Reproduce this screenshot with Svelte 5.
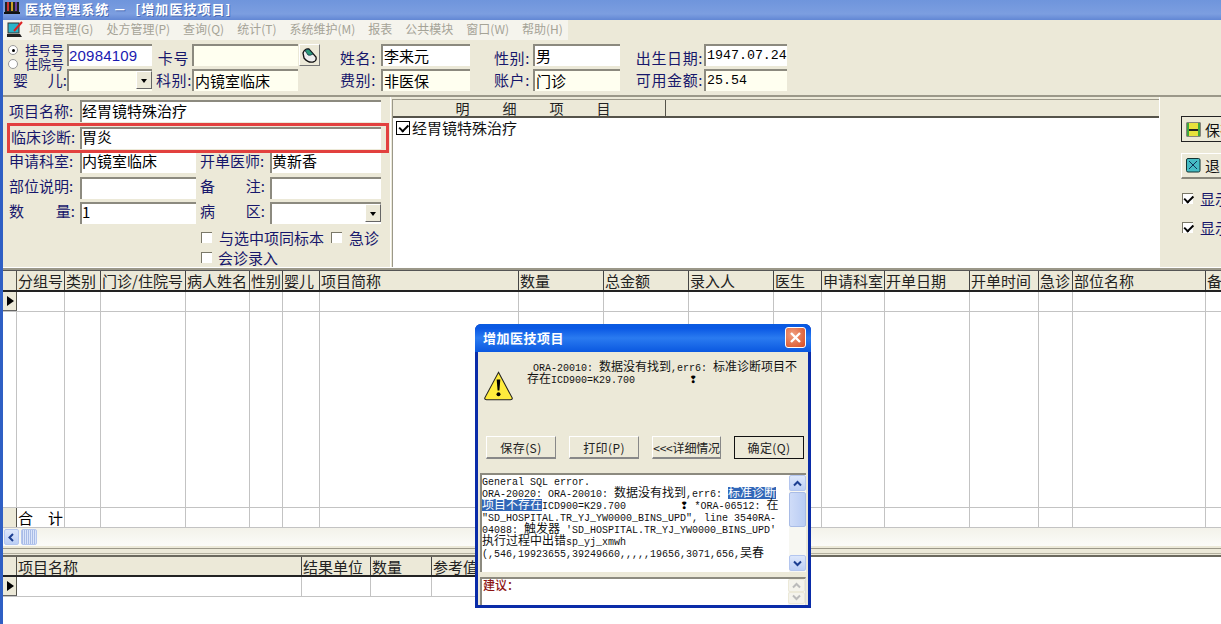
<script>
  const cols1 = [
    ['分组号', 48], ['类别', 36], ['门诊/住院号', 85], ['病人姓名', 64], ['性别', 33], ['婴儿', 37],
    ['项目简称', 199], ['数量', 85], ['总金额', 85], ['录入人', 85], ['医生', 48], ['申请科室', 63],
    ['开单日期', 85], ['开单时间', 69], ['急诊', 34], ['部位名称', 133], ['备注', 60]
  ];
  const cols2 = [['项目名称', 285], ['结果单位', 69], ['数量', 61], ['参考值', 200]];
  const menu = ['项目管理(G)', '处方管理(P)', '查询(Q)', '统计(T)', '系统维护(M)', '报表', '公共模块', '窗口(W)', '帮助(H)'];
  const sp = (n) => '\u00a0'.repeat(n);
</script>

<div class="win">
  <header class="title">
    <svg class="appicon" width="16" height="14" viewBox="0 0 16 14">
      <rect x="1" y="1" width="14" height="12" fill="#222"/>
      <rect x="3" y="1" width="2" height="9" fill="#c33"/>
      <rect x="7" y="1" width="2" height="9" fill="#c9a227"/>
      <rect x="11" y="1" width="2" height="9" fill="#6a3fa0"/>
      <rect x="0" y="11" width="16" height="2" fill="#111"/>
    </svg>
    <span>医技管理系统 － {sp(1)}[增加医技项目]</span>
  </header>

  <nav class="menubar">
    <div class="menus">
      <svg class="menuicon" width="18" height="18" viewBox="0 0 18 18">
        <rect x="2" y="2" width="11" height="10" fill="#2bb3c9" stroke="#333"/>
        <path d="M8 10 L16 1" stroke="#d22" stroke-width="2"/>
        <path d="M1 13 H14 L16 16 H1 Z" fill="#222"/>
      </svg>
      {#each menu as m}<span>{m}</span>{/each}
    </div>
  </nav>

  <section class="patient">
    <div class="radios">
      <label><i class="radio on"></i>挂号号</label>
      <label><i class="radio"></i>住院号</label>
    </div>
    <div class="in white blue">20984109</div>
    <div class="lb card r1">卡号</div>
    <div class="in yellow"></div>
    <div class="cardbtn">
      <svg width="17" height="17" viewBox="0 0 17 17">
        <path d="M2 6 Q4 1 8 2 L15 10 Q16 14 12 15 Q7 16 3 11 Z" fill="#eee" stroke="#111" stroke-width="1.300"/>
        <path d="M4 3.500 Q6 2 8 2.500 L12 7 Q9 9 7 8 Z" fill="#2a9a78" stroke="#134" stroke-width=".8"/>
      </svg>
    </div>
    <div class="lb name r1">姓名:</div>
    <div class="in white">李来元</div>
    <div class="lb sex r1">性别:</div>
    <div class="in white">男</div>
    <div class="lb birth r1">出生日期:</div>
    <div class="in white mono">1947.07.24</div>

    <div class="lb baby">婴<b></b>儿:</div>
    <div class="in yellow combo"><i class="drop"></i></div>
    <div class="lb dept">科别:</div>
    <div class="in yellow span2">内镜室临床</div>
    <div class="lb name">费别:</div>
    <div class="in yellow">非医保</div>
    <div class="lb sex">账户:</div>
    <div class="in yellow">门诊</div>
    <div class="lb birth">可用金额:</div>
    <div class="in yellow mono">25.54</div>
  </section>

  <section class="middle">
    <div class="form">
      <div class="row wide first-row"><span class="lb">项目名称:</span><div class="in white grow">经胃镜特殊治疗</div></div>
      <div class="row wide diag"><span class="lb">临床诊断:</span><div class="in white grow">胃炎</div></div>
      <div class="row split s1">
        <span class="lb">申请科室:</span><div class="in white w116">内镜室临床</div>
        <span class="lb lb2">开单医师:</span><div class="in white grow">黄新香</div>
      </div>
      <div class="row split">
        <span class="lb">部位说明:</span><div class="in white w116"></div>
        <span class="lb lb2 just"><em>备</em><em>注:</em></span><div class="in white grow"></div>
      </div>
      <div class="row split">
        <span class="lb just"><em>数</em><em>量:</em></span><div class="in white w116">1</div>
        <span class="lb lb2 just"><em>病</em><em>区:</em></span><div class="in white grow combo"><i class="drop"></i></div>
      </div>
      <div class="checks">
        <label><i class="box"></i><span class="gap1">与选中项同标本</span><i class="box b2"></i><span class="gap2">急诊</span></label>
        <label><i class="box"></i><span class="gap1 g3">会诊录入</span></label>
      </div>
    </div>

    <div class="detail">
      <div class="dhead"><div class="dcol">明<b></b>细<b></b>项<b></b>目</div></div>
      <div class="dbody"><i class="box checked"></i>经胃镜特殊治疗</div>
    </div>

    <div class="side">
      <button class="tool def">
        <svg width="15" height="15" viewBox="0 0 15 15">
          <rect x="0.5" y="0.5" width="14" height="14" fill="#222"/>
          <rect x="3" y="1" width="9" height="6" fill="#e8e23c"/>
          <rect x="3" y="9" width="9" height="5" fill="#e8e23c"/>
          <rect x="1" y="1" width="2" height="13" fill="#3fa63f"/>
          <rect x="12" y="1" width="2" height="13" fill="#3fa63f"/>
        </svg>保存
      </button>
      <button class="tool exit">
        <svg width="15" height="15" viewBox="0 0 15 15">
          <rect x="0.5" y="0.5" width="13.500" height="13.500" rx="1.500" fill="#45bcc4" stroke="#133"/>
          <path d="M3 3 L11 11 M11 3 L3 11" stroke="#135" stroke-width="1"/>
        </svg>退出
      </button>
      <label class="show s-a"><i class="box checked"></i>显示全部</label>
      <label class="show s-b"><i class="box checked"></i>显示全部</label>
    </div>
  </section>

  <section class="grid g1">
    <div class="ghead">
      <div class="ind"></div>
      {#each cols1 as c}<div class="th" style="width:{c[1]}px">{c[0]}</div>{/each}
    </div>
    <div class="grow-col">
      <div class="ind arrow"><i></i></div>
      {#each cols1 as c}<div class="td" style="width:{c[1]}px"></div>{/each}
    </div>
    <div class="gfill">
      <div class="ind"></div>
      {#each cols1 as c}<div class="td" style="width:{c[1]}px"></div>{/each}
    </div>
    <div class="gfoot">
      <div class="ind"></div>
      {#each cols1 as c, i}<div class="td" style="width:{c[1]}px">{i === 0 ? '合　计' : ''}</div>{/each}
    </div>
    <div class="hscroll">
      <span class="sbtn"><svg width="9" height="9" viewBox="0 0 9 9"><path d="M6 1 L2.500 4.500 L6 8" fill="none" stroke="#1d3f91" stroke-width="2"/></svg></span>
      <span class="sthumb"></span>
    </div>
  </section>

  <div class="splitter"></div>

  <section class="grid g2">
    <div class="ghead">
      <div class="ind"></div>
      {#each cols2 as c}<div class="th" style="width:{c[1]}px">{c[0]}</div>{/each}
    </div>
    <div class="grow-col">
      <div class="ind arrow"><i></i></div>
      {#each cols2 as c}<div class="td" style="width:{c[1]}px"></div>{/each}
    </div>
  </section>

  <div class="dialog">
    <div class="dtitle">
      <span>增加医技项目</span>
      <span class="close"><svg width="13" height="13" viewBox="0 0 13 13"><path d="M2 2 L11 11 M11 2 L2 11" stroke="#fff" stroke-width="2.400"/></svg></span>
    </div>
    <div class="dmain">
      <div class="dmsg">
        <svg class="warn" width="31" height="32" viewBox="0 0 34 34">
          <path d="M17 2 L32 30 Q32.500 32 30 32 L4 32 Q1.500 32 2 30 Z" fill="#ffec3d" stroke="#222" stroke-width="1.200"/>
          <path d="M15 10 L19 10 L18 22 L16 22 Z" fill="#000"/>
          <circle cx="17" cy="26" r="2.200" fill="#000"/>
        </svg>
        <p><span class="lat">{sp(1)}ORA-20010:{sp(1)}</span>数据没有找到<span class="lat">,err6:{sp(1)}</span>标准诊断项目不<br>存在<span class="lat">ICD900=K29.700{sp(9)}</span><span class="bang">❢</span></p>
      </div>
      <div class="dbtns">
        <button>保存(S)</button>
        <button>打印(P)</button>
        <button class="narrow">&lt;&lt;&lt;详细情况</button>
        <button class="default">确定(Q)</button>
      </div>
      <div class="dbox first">
        <div class="dtext"><span class="lat">General SQL error.</span><br><span class="lat">ORA-20020: ORA-20010:{sp(1)}</span>数据没有找到<span class="lat">,err6:{sp(1)}</span><mark>标准诊断<br>项目不存在</mark><span class="lat">ICD900=K29.700{sp(9)}</span><span class="bang">❢</span><span class="lat">{sp(1)}*ORA-06512:{sp(1)}</span>在<br><span class="lat">"SD_HOSPITAL.TR_YJ_YW0000_BINS_UPD", line 3540RA-</span><br><span class="lat">04088:{sp(1)}</span>触发器<span class="lat">{sp(1)}'SD_HOSPITAL.TR_YJ_YW0000_BINS_UPD'</span><br>执行过程中出错<span class="lat">sp_yj_xmwh</span><br><span class="lat">(,546,19923655,39249660,,,,,19656,3071,656,</span>吴春</div>
        <div class="vscroll">
          <span class="vb"><svg width="9" height="7" viewBox="0 0 9 7"><path d="M1 5.500 L4.500 2 L8 5.500" fill="none" stroke="#1d3f91" stroke-width="2"/></svg></span>
          <span class="vthumb"></span>
          <span class="vb"><svg width="9" height="7" viewBox="0 0 9 7"><path d="M1 1.500 L4.500 5 L8 1.500" fill="none" stroke="#1d3f91" stroke-width="2"/></svg></span>
        </div>
      </div>
      <div class="dbox second">
        <div class="dtext advice">建议：</div>
        <div class="vscroll off">
          <span class="vb"><svg width="9" height="7" viewBox="0 0 9 7"><path d="M1 5.500 L4.500 2 L8 5.500" fill="none" stroke="#bbb" stroke-width="2"/></svg></span>
          <span class="vb"><svg width="9" height="7" viewBox="0 0 9 7"><path d="M1 1.500 L4.500 5 L8 1.500" fill="none" stroke="#bbb" stroke-width="2"/></svg></span>
        </div>
      </div>
    </div>
  </div>
</div>

<style>
  :global(body) { margin: 0; overflow: hidden; background: #ece9d8; }
  * { box-sizing: border-box; }
  i, em { font-style: normal; display: block; }
  .win {
    position: relative; width: 1221px; height: 624px; overflow: hidden;
    background: #ece9d8; border-left: 3px solid #2f5fc4;
    font-family: "Noto Sans CJK SC", "Liberation Sans", sans-serif; font-size: 15px; color: #000;
  }
  .title {
    margin-left: -3px; height: 20px; display: flex; align-items: center; gap: 5px; padding: 0 0 4px 4px;
    background: linear-gradient(#6f95dc, #7c9ee0 70%, #6287d4);
    color: #fff; font-size: 13px; font-weight: 700; letter-spacing: 1.050px; text-shadow: 1px 1px 0 #4a6cb5;
  }
  .appicon { flex: none; }
  .menubar { height: 20px; }
  .menus {
    width: 565px; height: 20px; background: #f5f4ed; display: flex; align-items: center;
    color: #a5a397; font-size: 12px; padding: 0 0 4px 3px;
  }
  .menuicon { margin: 4px 5px 0 0; flex: none; }
  .menus span { margin-right: 13px; white-space: nowrap; }

  .lb { color: #17176b; white-space: nowrap; font-size: 15px; line-height: 20px; }
  .in {
    height: 22px; line-height: 19px; padding-left: 1px; font-size: 15px; white-space: nowrap; overflow: hidden;
    border-top: 2px solid #8c8a7f; border-left: 2px solid #8c8a7f; position: relative;
  }
  .white { background: #fff; }
  .yellow { background: #fffff0; }
  .blue { color: #1a1ab0; font-family: "Liberation Sans", sans-serif; font-size: 15px; letter-spacing: .2px; padding-left: 0; }
  .mono { font-family: "Liberation Mono", monospace; font-size: 13.300px; line-height: 20px; }

  .patient {
    height: 57px; padding: 4px 0 0 5px;
    border-bottom: 2px solid #9b9889;
    display: grid; grid-template-columns: 59px 85px 40px 106px 22px 61px 89px 63px 87px 84px 83px;
    grid-template-rows: 22px 22px; row-gap: 3px;
    align-items: center;
  }
  .patient .name, .patient .sex, .patient .birth, .patient .card, .patient .dept { letter-spacing: .6px; }
  .r1 { margin-top: 6px; }
  .radios { display: flex; flex-direction: column; font-size: 13px; color: #17176b; line-height: 14px; margin-top: 4px; }
  .radios label { display: flex; align-items: center; gap: 7px; }
  .radio { width: 10px; height: 10px; border-radius: 50%; background: #fff; border: 1px solid #999; position: relative; }
  .radio.on::after { content: ""; position: absolute; left: 2.500px; top: 2.500px; width: 3px; height: 3px; border-radius: 50%; background: #000; }
  .lb.card { justify-self: end; padding-right: 3px; }
  .lb.dept { justify-self: end; padding-right: 0; }
  .lb.baby { display: flex; padding-left: 5px; }
  .lb.baby b { width: 20px; }
  .lb.name, .lb.sex, .lb.birth { justify-self: end; }
  .lb.name { padding-right: 5px; }
  .lb.sex { padding-right: 3px; }
  .lb.birth { padding-right: 1px; }
  .span2 { grid-column: 4 / span 1; }
  .cardbtn {
    width: 21px; height: 22px; background: #ece9d8; display: flex; align-items: center; justify-content: center;
    border: 1px solid; border-color: #fff #777 #777 #fff; margin-left: 1px;
  }
  .patient .span2 + .lb { grid-column: 6; }
  .drop {
    position: absolute; right: 0; top: 0; width: 16px; height: 18px; background: #ece9d8;
    border: 1px solid; border-color: #fff #666 #666 #fff;
  }
  .drop::after {
    content: ""; position: absolute; left: 4px; top: 7px;
    border: 3px solid transparent; border-top: 4px solid #000; border-bottom: 0;
  }

  .middle { height: 170px; display: flex; padding-left: 1px; }
  .form { width: 387px; flex: none; padding-top: 2px; border-right: 1px solid #fff; }
  .form .in { line-height: 16px; padding-left: 0; }
  .row { display: flex; align-items: center; height: 23px; }
  .row .lb { width: 76px; padding-left: 5px; flex: none; }
  .row.split .lb, .diag .lb { margin-top: -3px; }
  .grow { flex: 1; }
  .wide { width: 377px; }
  .first-row { height: 24px; }
  .form .first-row .in { line-height: 18px; }
  .diag {
    width: 382px; height: 30px; border: 3px solid #e2403e; margin: 0 0 0 3px; padding-right: 5px;
  }
  .diag .lb { width: 70px; padding-left: 1px; }
  .row.split { width: 377px; height: 25px; }
  .row.split.s1 { height: 21px; margin-bottom: 1px; align-items: flex-start; }
  .row.split.s1 .lb { margin-top: -2px; }
  .form .s1 .in { height: 20px; border-top: 0; line-height: 16px; }
  .w116 { width: 116px; flex: none; }
  .row .lb2 { width: 74px; padding-left: 4px; }
  .lb.just { display: flex; justify-content: space-between; padding-right: 5px; }
  .checks { display: flex; flex-direction: column; padding-left: 197px; margin-top: 2px; color: #17176b; font-size: 15px; }
  .checks label { display: flex; align-items: center; height: 20px; white-space: nowrap; }
  .box {
    width: 11px; height: 11px; flex: none; background: #fff; position: relative;
    border-top: 1px solid #7a7868; border-left: 1px solid #7a7868;
  }
  .checks .gap1 { margin-left: 7px; }
  .checks .g3 { margin-left: 6px; }
  .checks .b2 { margin-left: 7px; }
  .checks .gap2 { margin-left: 7px; }
  .box.checked::after {
    content: ""; position: absolute; left: 2px; top: 2px; width: 7px; height: 4px;
    border-left: 2px solid #000; border-bottom: 2px solid #000; transform: rotate(-45deg) translate(0, -1px);
  }

  .detail { width: 767px; flex: none; margin: 2px 0 0 1px; border: 1px solid #9b9889; border-right: 0; border-bottom: 0; background: #fff; }
  .dhead { height: 18px; background: #ece9d8; border-bottom: 2px solid #55534a; }
  .dcol {
    width: 273px; height: 16px; border-right: 1px solid #55534a; display: flex; justify-content: center;
    line-height: 17px; font-size: 14px; color: #222; padding-left: 8px;
  }
  .dcol b { width: 33px; }
  .dbody { display: flex; align-items: center; gap: 2px; padding: 0 0 0 3px; font-size: 15px; line-height: 20px; color: #111; }
  .dbody .box { width: 14px; height: 14px; border: 1px solid #000; }
  .dbody .box.checked::after { left: 3px; top: 3px; }

  .side { flex: 1; padding: 19px 0 0 21px; position: relative; border-left: 1px solid #fff; }
  .tool {
    display: flex; align-items: center; gap: 4px; width: 80px; height: 26px; padding: 0 0 0 4px;
    background: #ece9d8; border: 0; border-top: 1px solid #fff; border-left: 1px solid #fff;
    font: 15px "Noto Sans CJK SC", sans-serif; color: #111; white-space: nowrap;
  }
  .tool.def { border: 1px solid #222; margin-bottom: 11px; }
  .tool.exit { border-bottom: 2px solid #8a887c; }
  .show { display: flex; align-items: center; gap: 7px; color: #17176b; height: 20px; white-space: nowrap; margin-left: 1px; }
  .show .box { width: 11px; height: 11px; }
  .s-a { margin-top: 9px; }
  .s-b { margin-top: 9px; }

  .grid { background: #fff; }
  .g1 { height: 278px; border-top: 2px solid #9b9889; margin-top: 1px; display: flex; flex-direction: column; box-shadow: 0 -1px 0 #fff; }
  .ghead, .grow-col, .gfill, .gfoot { display: flex; flex: none; }
  .ghead { height: 22px; background: #ece9d8; border-bottom: 2px solid #222; border-top: 1px solid #555; }
  .ind { width: 14px; flex: none; background: #ece9d8; border-right: 1px solid #55534a; }
  .th {
    flex: none; height: 19px; line-height: 19px; font-size: 15px; padding-left: 1px;
    border-right: 1px solid #444; color: #222; white-space: nowrap; overflow: hidden;
  }
  .td { flex: none; border-right: 1px solid #c3c3c3; font-size: 15px; padding-left: 1px; line-height: 19px; white-space: pre; }
  .grow-col { height: 20px; border-bottom: 1px solid #c3c3c3; }
  .gfill { height: 196px; border-bottom: 1px solid #c3c3c3; }
  .gfill .ind { background: #fff; border-right: 1px solid #c3c3c3; }
  .gfoot { height: 20px; border-bottom: 1px solid #c3c3c3; }
  .arrow { position: relative; border-bottom: 1px solid #666; }
  .arrow i {
    position: absolute; left: 4px; top: 4px;
    border: 5.500px solid transparent; border-left: 7px solid #000; border-right: 0;
  }
  .hscroll { flex: 1; display: flex; background: linear-gradient(#f3f2ea, #fbfbf8); padding: 1px 0 1px 1px; gap: 2px; align-items: stretch; }
  .sbtn, .sthumb {
    display: flex; align-items: center; justify-content: center; border: 1px solid #b4c6ef; border-radius: 2px;
    background: linear-gradient(#dde7fb, #bccff5);
  }
  .sbtn { width: 15px; }
  .sthumb { width: 16px; background: repeating-linear-gradient(90deg, #a9bce6 0 1px, #dbe5fa 1px 2px); }
  .splitter {
    height: 11px; border-bottom: 2px solid #6b695e;
    background: linear-gradient(#ece9d8 0 2px, #9b9889 2px 3px, #ece9d8 3px 7px, #b3b09f 7px 8px, #ece9d8 8px);
  }
  .g2 { height: 70px; }
  .g2 .ghead { width: 472px; height: 20px; border-top: 0; }
  .g2 .ghead .th { height: 18px; line-height: 19px; }
  .g2 .grow-col { width: 472px; }

  .dialog {
    position: absolute; left: 472px; top: 324px; width: 336px; height: 284px;
    background: #0a2ca8; border-radius: 6px 6px 0 0; padding: 0 3px 3px; overflow: hidden; z-index: 2;
  }
  .dtitle {
    margin: 0 -3px; height: 28px; display: flex; align-items: center; justify-content: space-between; padding: 0 5px 1px 8px;
    background: linear-gradient(#0a5be0, #0a58e4 15%, #2a7bf0 50%, #0a58e0);
    color: #fff; font-size: 13px; font-weight: 700; letter-spacing: .5px;
  }
  .close {
    width: 21px; height: 21px; border: 1px solid #fff; border-radius: 3px; display: flex; align-items: center; justify-content: center;
    background: radial-gradient(circle at 35% 35%, #f0a080, #d84a20);
  }
  .dmain { background: #ece9d8; height: 253px; display: flex; flex-direction: column; }
  .dmsg { height: 78px; display: flex; padding: 8px 0 0 5px; flex: none; }
  .warn { margin-top: 10px; flex: none; }
  .dmsg p { margin: 0 0 0 13px; font-size: 12px; line-height: 12px; color: #111; white-space: nowrap; }
  .lat { font-family: "Liberation Mono", monospace; font-size: 10px; line-height: 0; }
  .bang { font-size: 10px; color: #000; font-family: "DejaVu Sans", sans-serif; line-height: 0; }
  .dbtns { height: 43px; display: flex; padding: 6px 0 0 8px; flex: none; gap: 13px; }
  .dbtns button {
    width: 70px; height: 23px; padding: 0; background: #ece9d8; font: 12px "Noto Sans CJK SC", sans-serif; color: #222; letter-spacing: .4px;
    border: 0; border-right: 1px solid #888; border-bottom: 2px solid #888; border-top: 1px solid #fff; border-left: 1px solid #fff; white-space: nowrap;
  }
  .dbtns .narrow { width: 69px; letter-spacing: -.2px; }
  .dbtns .default { border: 1px solid #111; }
  .dbox { display: flex; background: #fff; border-top: 2px solid #8c8a7f; border-left: 2px solid #8c8a7f; flex: none; margin: 0 2px; }
  .first { height: 99px; }
  .second { height: 28px; margin-top: 5px; border-right: 1px solid #ddd; }
  .dtext {
    flex: 1; padding: 0; margin-top: -1px; font-size: 12px; line-height: 12px; color: #111; white-space: nowrap; overflow: hidden;
  }
  .advice { color: #8c1414; font-size: 12px; line-height: 12px; font-weight: 500; padding-left: 1px; margin-top: 0; overflow: visible; }
  mark {
    color: #fff; line-height: 0;
    background: linear-gradient(transparent 3.500px, #3167b8 3.500px, #3167b8 16px, transparent 16px);
  }
  .vscroll { width: 17px; flex: none; display: flex; flex-direction: column; justify-content: space-between; background: #f7f7f2; padding-bottom: 1px; }
  .vb {
    height: 16px; display: flex; align-items: center; justify-content: center; border: 1px solid #b4c6ef; border-radius: 2px;
    background: linear-gradient(#dde7fb, #bccff5);
  }
  .vthumb { width: 17px; height: 35px; margin-bottom: auto; margin-top: 1px; border: 1px solid #a9bce6; border-radius: 2px; background: linear-gradient(90deg, #cfdcf8, #b9ccf4); }
  .off .vb { background: #f4f3ec; border-color: #ece9d8; height: 13px; }
</style>
